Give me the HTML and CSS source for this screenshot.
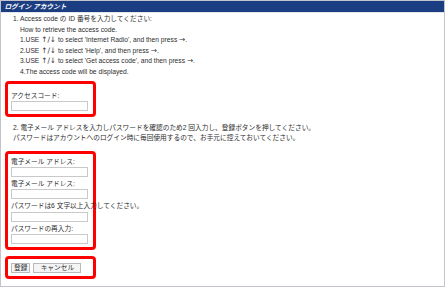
FILE: index.html
```html
<!DOCTYPE html>
<html lang="ja">
<head>
    <meta charset="UTF-8">
    <meta name="viewport" content="width=device-width, initial-scale=1.0">
    <title>ログイン アカウント</title>
    <link rel="stylesheet" href="styles.css">
</head>
<body>
    <div class="panel">
        <div class="panel-title"><span class="slant">ログイン アカウント</span></div>

        <div class="panel-body">
            <p class="step">1. Access code の ID 番号を入力してください:</p>
            <div class="howto">
                <p>How to retrieve the access code.</p>
                <p>1.USE <span class="arrow">↑/↓</span> to select 'Internet Radio', and then press <span class="arrow">→</span>.</p>
                <p>2.USE <span class="arrow">↑/↓</span> to select 'Help', and then press <span class="arrow">→</span>.</p>
                <p>3.USE <span class="arrow">↑/↓</span> to select 'Get access code', and then press <span class="arrow">→</span>.</p>
                <p>4.The access code will be displayed.</p>
            </div>

            <div class="mark mark-code">
                <label for="code">アクセスコード:</label>
                <input type="text" class="field" id="code">
            </div>

            <p class="step step2">2. 電子メール アドレスを入力しパスワードを確認のため2 回入力し、登録ボタンを押してください。<br>パスワードはアカウントへのログイン時に毎回使用するので、お手元に控えておいてください。</p>

            <div class="mark mark-account">
                <label for="mail1">電子メール アドレス:</label>
                <input type="text" class="field" id="mail1">
                <label for="mail2">電子メール アドレス:</label>
                <input type="text" class="field" id="mail2">
                <label for="pass1">パスワードは6 文字以上入力してください。</label>
                <input type="password" class="field" id="pass1">
                <label for="pass2">パスワードの再入力:</label>
                <input type="password" class="field" id="pass2">
            </div>

            <div class="mark mark-buttons">
                <button class="btn">登録</button>
                <button class="btn btn-cancel">キャンセル</button>
            </div>
        </div>
    </div>
</body>
</html>
```

FILE: styles.css
```css
body {
    margin: 0;
    background: #fff;
    font-family: "Liberation Sans", "Noto Sans CJK JP", sans-serif;
    font-size: 6.7px;
    color: #2e2e2e;
}

.panel {
    width: 443px;
    height: 285px;
    border: 1px solid #c3c3cb;
}

.panel-title {
    height: 11px;
    line-height: 11px;
    padding-left: 4px;
    background-color: #1b3e82;
    border-bottom: 1px solid #e4e6ec;
    color: #fff;
    font-weight: bold;
}

.slant {
    display: inline-block;
    transform: skewX(-14deg);
}

.panel-body {
    padding: 1px 0 0 4px;
}

p {
    margin: 0;
    line-height: 10.6px;
}

.arrow {
    font-family: "DejaVu Sans", sans-serif;
    font-size: 7.4px;
}

.step {
    padding-left: 8px;
}

.howto {
    padding-left: 15px;
}

.mark {
    width: 82px;
    border: 3px solid #f00;
    border-radius: 4px;
    padding-left: 3px;
}

.mark-code {
    margin-top: 3px;
    padding-top: 6px;
    padding-bottom: 2px;
}

.step2 {
    margin: 6px 0 7px;
}

.mark-account {
    padding-top: 2px;
    padding-bottom: 2px;
}

label {
    display: block;
    white-space: nowrap;
    line-height: 11.3px;
}

.mark-code label {
    line-height: 11px;
}

.field {
    display: block;
    box-sizing: border-box;
    width: 77px;
    height: 10px;
    margin: 0 0 1px;
    padding: 0;
    border: 1px solid #c9c9c9;
    background: #fff;
}

.mark-buttons {
    margin-top: 6px;
    padding-top: 4px;
    padding-bottom: 3px;
    display: flex;
    gap: 3px;
}

.btn {
    height: 10px;
    padding: 0 2px;
    border: 1px solid #b9b9b9;
    background-color: #f4f4f4;
    font-family: inherit;
    font-size: 6.7px;
    line-height: 8px;
    color: #2e2e2e;
}

.btn-cancel {
    width: 48px;
}
```
